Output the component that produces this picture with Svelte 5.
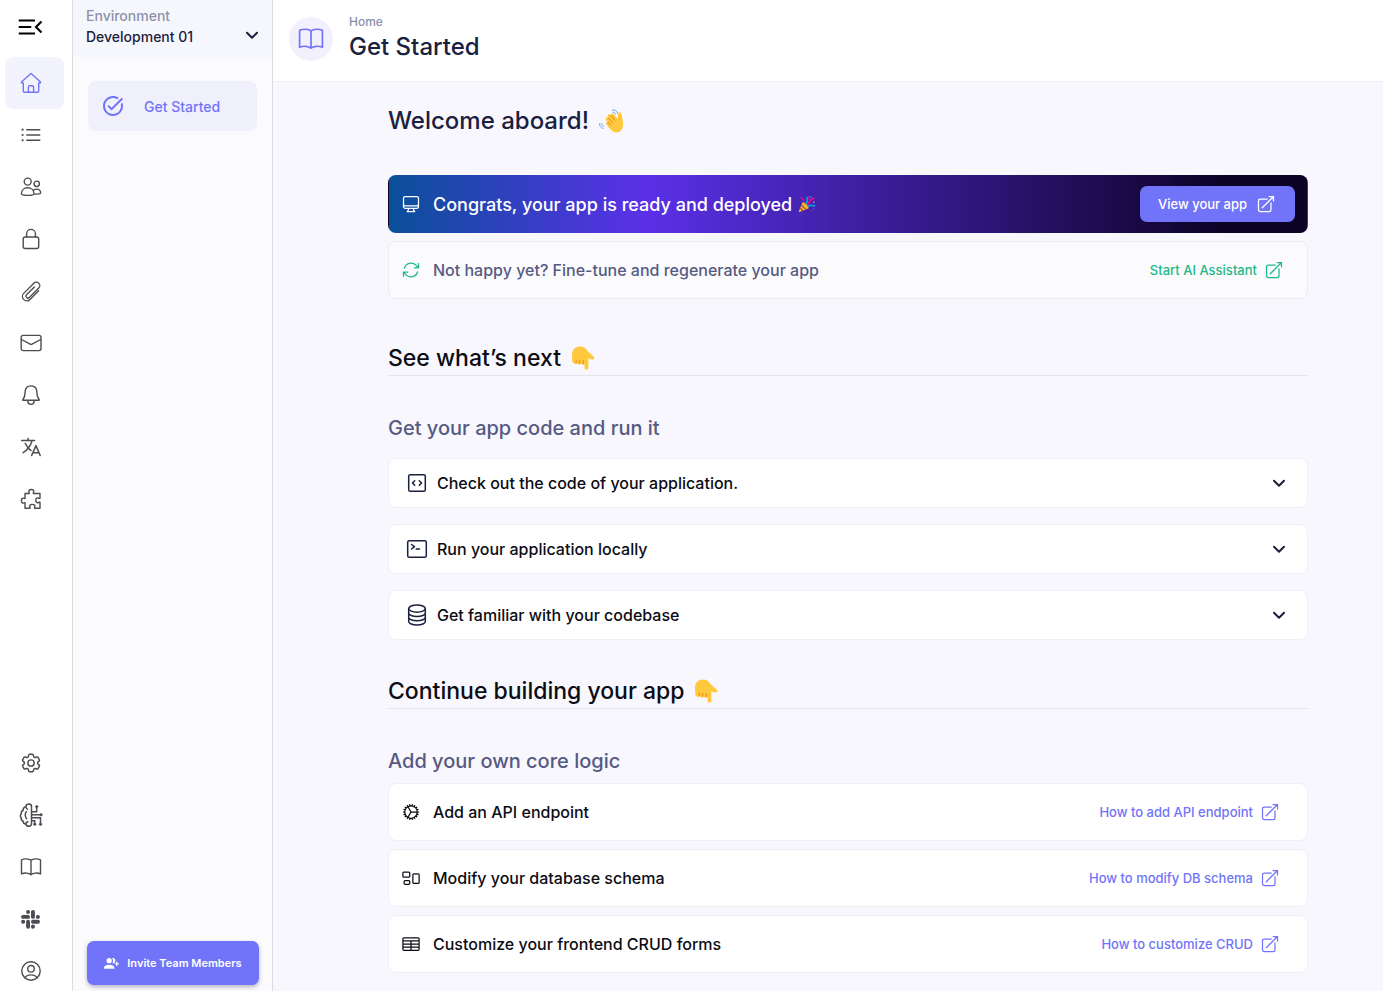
<script lang="ts">
  type Item = { name: string; icon: string; active?: boolean };

  const topNav: Item[] = [
    { name: 'Home', icon: 'home', active: true },
    { name: 'Entities', icon: 'list' },
    { name: 'Users', icon: 'people' },
    { name: 'Security', icon: 'lock' },
    { name: 'Files', icon: 'clip' },
    { name: 'Emails', icon: 'mail' },
    { name: 'Notifications', icon: 'bell' },
    { name: 'Translations', icon: 'language' },
    { name: 'Plugins', icon: 'puzzle' }
  ];
  const bottomNav: Item[] = [
    { name: 'Settings', icon: 'gear' },
    { name: 'AI', icon: 'brain' },
    { name: 'Docs', icon: 'book' },
    { name: 'Slack', icon: 'slack' },
    { name: 'Profile', icon: 'profile' }
  ];
  const steps = [
    { title: 'Check out the code of your application.', icon: 'code' },
    { title: 'Run your application locally', icon: 'terminal' },
    { title: 'Get familiar with your codebase', icon: 'database' }
  ];
  const guides = [
    { title: 'Add an API endpoint', icon: 'cog', link: 'How to add API endpoint' },
    { title: 'Modify your database schema', icon: 'schema', link: 'How to modify DB schema' },
    { title: 'Customize your frontend CRUD forms', icon: 'table', link: 'How to customize CRUD' }
  ];
</script>

{#snippet icon(name: string)}
  {#if name === 'home'}
    <svg class="line" viewBox="0 0 20 20"><path d="M.5 9.9V9L9.3.9a1 1 0 0 1 1.4 0L19.500 9v.9h-1.800v8a1.400 1.400 0 0 1-1.400 1.400H3.700a1.400 1.400 0 0 1-1.400-1.400v-8zM7.400 19.200v-5.100c0-.8.5-1.300 1.300-1.300h2.600c.8 0 1.300.5 1.300 1.300v5.100" /></svg>
  {:else if name === 'list'}
    <svg class="line" viewBox="0 0 20 20"><path d="M5.800 4.700h13M5.800 10h13M5.800 15.300h13" /><g fill="currentColor" stroke="none"><circle cx="1.600" cy="4.700" r="1.100" /><circle cx="1.600" cy="10" r="1.100" /><circle cx="1.600" cy="15.300" r="1.100" /></g></svg>
  {:else if name === 'people'}
    <svg class="line" viewBox="0 0 20 20"><circle cx="6.700" cy="4.600" r="3.500" /><circle cx="15.700" cy="6.800" r="2.700" /><path d="M.4 16.800c0-3.600 2.700-6 6.300-6s6.300 2.400 6.300 6c0 1-2.900 1.600-6.300 1.600S.4 17.800.4 16.800ZM13 12.800c.8-.5 1.700-.7 2.700-.7 2.300 0 3.900 1.600 3.900 4 0 .7-1.900 1-3.800 1-1 0-2 0-2.800-.2" /></svg>
  {:else if name === 'lock'}
    <svg class="line" viewBox="0 0 20 20"><rect x="2.200" y="8" width="15.500" height="11.500" rx="2" /><path d="M5.600 8V4.800a4.400 4.400 0 0 1 8.800 0V8" /></svg>
  {:else if name === 'clip'}
    <svg viewBox="1.500 1 21 21" fill="none" stroke="currentColor" stroke-width="1.400" stroke-linecap="round" stroke-linejoin="round"><path d="m20 11.300-9 9.100a4.600 4.600 0 0 1-6.700-6.400L15 3.300a3.600 3.600 0 0 1 5.200 5.100L10.200 18.300a2 2 0 0 1-2.900-2.800l8.200-8.200" /></svg>
  {:else if name === 'mail'}
    <svg class="line" viewBox="0 0 20 20"><rect x=".2" y="2.400" width="19.800" height="15.200" rx="2" /><path d="m.5 6.500 8.700 4.700c.6.400 1.200.4 1.800 0l8.700-4.700" /></svg>
  {:else if name === 'bell'}
    <svg class="line" viewBox="0 0 20 20"><path d="M10 .9c3.700 0 5.900 2.500 5.900 6.300 0 4.600 1 5.800 2.200 7.300.3.400 0 .8-.4.800H2.300c-.4 0-.7-.4-.4-.8 1.200-1.500 2.200-2.700 2.200-7.300C4.100 3.400 6.300.9 10 .9ZM6.900 15.500v.8a3.100 3.100 0 0 0 6.200 0v-.8" /></svg>
  {:else if name === 'language'}
    <svg viewBox="32 50 450 412" fill="none" stroke="currentColor" stroke-width="34" stroke-linecap="round" stroke-linejoin="round"><path d="M48 112h288M192 64v48M272 448l96-224 96 224M301 384h133M281 112S257 206 199 277 80 384 80 384M256 336s-35-27-72-75-56-85-56-85" /></svg>
  {:else if name === 'puzzle'}
    <svg class="line" viewBox="0 0 20 20"><path d="M4 4.500h4.200v-.8C7.200 2 8.200.5 10.300.5s3.100 1.500 2.100 3.200v.8H19v4.800h-1.200c-1.500-1-3-.1-3 2s1.500 3 3 2H19v5.900h-5.400v-1c1-1.400 0-2.800-2.300-2.800s-3.300 1.400-2.300 2.800v1H4v-5.500h-.8c-1.400 1-2.800 0-2.800-2.100s1.400-3.100 2.800-2.100H4z" /></svg>
  {:else if name === 'gear'}
    <svg viewBox="1.800 1.800 20.400 20.400" fill="none" stroke="currentColor" stroke-width="1.500" stroke-linejoin="round"><path d="M9.594 3.940c.09-.542.56-.94 1.110-.94h2.593c.55 0 1.020.398 1.110.94l.213 1.281c.063.374.313.686.645.87.074.04.147.083.22.127.325.196.72.257 1.075.124l1.217-.456a1.125 1.125 0 0 1 1.370.49l1.296 2.247a1.125 1.125 0 0 1-.26 1.431l-1.003.827c-.293.241-.438.613-.43.992a7.723 7.723 0 0 1 0 .255c-.008.378.137.75.43.991l1.004.827c.424.35.534.955.26 1.430l-1.298 2.247a1.125 1.125 0 0 1-1.369.491l-1.217-.456c-.355-.133-.75-.072-1.076.124a6.470 6.470 0 0 1-.22.128c-.331.183-.581.495-.644.869l-.213 1.281c-.09.543-.56.94-1.110.94h-2.594c-.55 0-1.019-.398-1.110-.94l-.213-1.281c-.062-.374-.312-.686-.644-.87a6.520 6.520 0 0 1-.22-.127c-.325-.196-.72-.257-1.076-.124l-1.217.456a1.125 1.125 0 0 1-1.369-.49l-1.297-2.247a1.125 1.125 0 0 1 .26-1.431l1.004-.827c.292-.24.437-.613.43-.991a6.932 6.932 0 0 1 0-.255c.007-.38-.138-.751-.43-.992l-1.004-.827a1.125 1.125 0 0 1-.26-1.430l1.297-2.247a1.125 1.125 0 0 1 1.370-.491l1.216.456c.356.133.751.072 1.076-.124.072-.044.146-.086.22-.128.332-.183.582-.495.644-.869l.214-1.280Z" /><circle cx="12" cy="12" r="3.200" /></svg>
  {:else if name === 'brain'}
    <svg class="wide" viewBox="0 0 24 24" fill="none" stroke="currentColor" stroke-width="1.500" stroke-linecap="round" stroke-linejoin="round"><path d="M12.500 3.500c0-1.400-1-2.500-2.600-2.500C8.200 1 7 2.200 6.800 3.800 5 4 3.900 5.500 4.200 7.300 2.600 8 2 9.300 2.300 10.700c-1.300 1.200-1.300 3 0 4.100-.4 1.600.4 2.900 1.900 3.500 0 1.700 1.100 2.800 2.700 2.900.3 1.200 1.500 2 3 2 1.600 0 2.600-1.200 2.600-2.600zM6.800 3.800c.1 1.200.7 1.900 1.700 2.300M6.900 21.200c0-1.300.8-2.300 2.100-2.500M7.500 8.500c-1.700 1.500-1.800 5.500.2 7.200M12.500 8.800h5.200V4.500M12.500 11.800h8.500M12.500 14.800h9V21M12.500 17.800h3.200V21" /><g fill="currentColor" stroke-width=".6"><circle cx="17.700" cy="3.600" r="1.200" /><circle cx="22" cy="11.800" r="1.200" /><circle cx="15.700" cy="21.300" r="1.200" /><circle cx="21.500" cy="21.300" r="1.200" /></g></svg>
  {:else if name === 'book'}
    <svg class="line" viewBox="0 0 20 20"><path d="M10 3.300C8 1.600 3.500 1.400.5 2.800v14.100c3-1.300 7.500-1.100 9.500.8 2-1.900 6.500-2.100 9.500-.8V2.800C16.500 1.400 12 1.600 10 3.300Zm0 0v14.300" /></svg>
  {:else if name === 'slack'}
    <svg viewBox="0 0 20 20" fill="currentColor">
      {#each [0, 90, 180, 270] as angle}
        <g transform="translate(-.5 .3) rotate({angle} 10 10)"><rect x="5.600" y=".6" width="3.900" height="4.100" rx="1.900" /><rect x=".6" y="5.600" width="8.900" height="3.900" rx="1.900" /></g>
      {/each}
    </svg>
  {:else if name === 'profile'}
    <svg class="line" viewBox="0 0 20 20"><circle cx="10" cy="10" r="9.200" /><circle cx="10" cy="7.800" r="3.300" /><path d="M3.800 16.600c1.500-2 3.700-2.700 6.200-2.700s4.700.7 6.200 2.700" /></svg>
  {:else if name === 'code'}
    <svg viewBox="0 0 20 20" fill="none" stroke="currentColor" stroke-width="1.500" stroke-linecap="round" stroke-linejoin="round"><rect x="1.700" y="1.700" width="16.600" height="16.600" rx="1.600" /><path d="M7.700 7.700 5.500 10l2.200 2.300M12.300 7.700l2.200 2.300-2.200 2.300" /></svg>
  {:else if name === 'terminal'}
    <svg viewBox="0 0 20 20" fill="none" stroke="currentColor" stroke-width="1.500" stroke-linecap="round" stroke-linejoin="round"><rect x=".7" y="1.700" width="18.600" height="16.600" rx="1.600" /><path d="m4.500 5.500 3 2.200-3 2.300M9.200 10h3.200" /></svg>
  {:else if name === 'database'}
    <svg viewBox="0 1 20 20" fill="none" stroke="currentColor" stroke-width="1.500"><ellipse cx="10" cy="4.600" rx="8.300" ry="3.600" /><path d="M1.700 4.600v12.800c0 2 3.700 3.600 8.300 3.600s8.300-1.600 8.300-3.600V4.600M1.700 8.900c0 2 3.700 3.600 8.300 3.600s8.300-1.600 8.300-3.600M1.700 13.200c0 2 3.700 3.600 8.300 3.600s8.300-1.600 8.300-3.600" /></svg>
  {:else if name === 'cog'}
    <svg class="hero" viewBox="0 0 24 24"><path d="M4.500 12a7.500 7.500 0 0 0 15 0m-15 0a7.500 7.500 0 1 1 15 0m-15 0H3m16.500 0H21m-1.500 0H12m-8.457 3.077 1.410-.513m14.095-5.130 1.410-.513M5.106 17.785l1.150-.964m11.490-9.642 1.149-.964M7.501 19.795l.75-1.300m7.500-12.990.75-1.300m-6.063 16.658.26-1.477m2.605-14.772.26-1.477m0 17.726-.26-1.477M10.698 4.614l-.26-1.477M16.500 19.794l-.75-1.299M7.500 4.205 12 12m6.894 5.785-1.149-.964M6.256 7.178l-1.150-.964m15.352 8.864-1.410-.513M4.954 9.435l-1.410-.514M12.002 12l-3.750 6.495" /></svg>
  {:else if name === 'schema'}
    <svg class="hero" viewBox="0 0 24 24"><path d="M2.250 6.125C2.250 5.500 2.754 5 3.375 5h6c.621 0 1.125.504 1.125 1.125v3.750c0 .621-.504 1.125-1.125 1.125h-6a1.125 1.125 0 0 1-1.125-1.125v-3.750ZM14.250 8.125c0-.621.504-1.125 1.125-1.125h5.250c.621 0 1.125.504 1.125 1.125v9.250c0 .621-.504 1.125-1.125 1.125h-5.250a1.125 1.125 0 0 1-1.125-1.125v-9.250ZM3.750 16.125c0-.621.504-1.125 1.125-1.125h4.500c.621 0 1.125.504 1.125 1.125v2.250c0 .621-.504 1.125-1.125 1.125h-4.500a1.125 1.125 0 0 1-1.125-1.125v-2.250Z" /></svg>
  {:else if name === 'table'}
    <svg class="hero" viewBox="0 0 24 24"><path d="M3.400 4.500h17.200c.6 0 1.100.5 1.100 1.100v12.800c0 .6-.5 1.100-1.100 1.100H3.400c-.6 0-1.100-.5-1.100-1.100V5.600c0-.6.5-1.100 1.100-1.100ZM2.300 8.300h19.400M2.300 12h19.400M2.300 15.700h19.400M12 8.300v11.200" /></svg>
  {:else if name === 'desktop'}
    <svg class="hero" viewBox="0 0 24 24"><path d="M9 17.250v1.007a3 3 0 0 1-.879 2.122L7.500 21h9l-.621-.621A3 3 0 0 1 15 18.257V17.250m6-12V15a2.250 2.250 0 0 1-2.250 2.250H5.250A2.250 2.250 0 0 1 3 15V5.250m18 0A2.250 2.250 0 0 0 18.750 3H5.250A2.250 2.250 0 0 0 3 5.250m18 0V12a2.250 2.250 0 0 1-2.250 2.250H5.250A2.250 2.250 0 0 1 3 12V5.250" /></svg>
  {:else if name === 'refresh'}
    <svg class="hero" viewBox="0 0 24 24"><path d="M16.023 9.348h4.992v-.001M2.985 19.644v-4.992m0 0h4.992m-4.993 0 3.181 3.183a8.250 8.250 0 0 0 13.803-3.700M4.031 9.865a8.250 8.250 0 0 1 13.803-3.700l3.181 3.182m0-4.991v4.990" /></svg>
  {:else if name === 'external'}
    <svg class="hero" viewBox="0 0 24 24"><path d="M13.500 6H5.250A2.250 2.250 0 0 0 3 8.250v10.500A2.250 2.250 0 0 0 5.250 21h10.500A2.250 2.250 0 0 0 18 18.750V10.500m-10.500 6L21 3m0 0h-5.250M21 3v5.250" /></svg>
  {:else if name === 'chevron'}
    <svg viewBox="0 0 20 20" fill="none" stroke="currentColor" stroke-width="2" stroke-linecap="round" stroke-linejoin="round"><path d="m5 7.800 5 5 5-5" /></svg>
  {/if}
{/snippet}

{#snippet pointDown()}
  <svg class="emoji" viewBox="0 0 24 24" aria-hidden="true">
    <path fill="#ffc83d" d="M1 10C.7 4 4 .5 9 .5c3.800 0 6.200 1.500 7.600 4.800l6.100 5.200c1.100 1 .7 2.700-.7 3-1.500.2-3.400-.4-4.700-1.200l.1 9.700c0 2.200-3.700 2.200-3.800 0l-.2-4.300c-.8 1.300-3 1.300-3.600 0-.8 1.200-2.900 1.200-3.500-.1C4.900 18.600 1.300 17.700 1.300 15z" />
    <path d="M5.200 14v2.800M8.700 14.200v3M12.300 14.500v3.300" fill="none" stroke="#e98b17" stroke-linecap="round" />
  </svg>
{/snippet}

<div class="app">
  <aside class="rail">
    <button class="collapse" aria-label="Collapse menu">
      <svg viewBox="0 0 24 24" fill="none" stroke="currentColor" stroke-width="1.700"><path d="M3 6.800h13M3 12h10M3 17.200h13M21.200 7.600 16.800 12l4.400 4.400" /></svg>
    </button>
    <nav class="top" aria-label="Main">
      {#each topNav as item}
        <a href="#{item.icon}" class:active={item.active} aria-label={item.name}>{@render icon(item.icon)}</a>
      {/each}
    </nav>
    <nav class="bottom" aria-label="Account">
      {#each bottomNav as item}
        <a href="#{item.icon}" aria-label={item.name}>{@render icon(item.icon)}</a>
      {/each}
    </nav>
  </aside>

  <aside class="side">
    <div class="env">
      <label for="env">Environment</label>
      <div class="pick">
        <select id="env"><option>Development 01</option></select>
        {@render icon('chevron')}
      </div>
    </div>
    <a class="entry" href="#get-started">
      <svg viewBox="0 0 24 24" fill="currentColor"><path d="M22 5.180 10.590 16.600l-4.240-4.240 1.410-1.410 2.830 2.830 10-10L22 5.180zm-2.210 5.040c.13.57.21 1.170.21 1.780 0 4.420-3.580 8-8 8s-8-3.580-8-8 3.580-8 8-8c1.580 0 3.040.46 4.280 1.250l1.440-1.440C16.100 2.670 14.130 2 12 2 6.480 2 2 6.480 2 12s4.480 10 10 10 10-4.480 10-10c0-1.190-.22-2.330-.6-3.390l-1.610 1.610z" /></svg>
      <span>Get Started</span>
    </a>
    <button class="invite">
      <svg viewBox="0 0 16 16" fill="currentColor"><circle cx="5.500" cy="5" r="2.800" /><path d="M0 13.500v-1.200c0-2 2.800-3.100 5.500-3.100S11 10.300 11 12.300v1.200zM8.700 2.300c2.700-.3 3.600 1.400 3.400 2.900-.2 1.400-1.400 2.500-3.300 2.500 1-1.500 1.200-3.600-.1-5.400zM13 6h1.300v1.600H16v1.300h-1.700v1.700H13V8.900h-1.700V7.600H13z" /></svg>
      Invite Team Members
    </button>
  </aside>

  <main>
    <header>
      <span class="badge">{@render icon('book')}</span>
      <div>
        <a class="crumb" href="#home">Home</a>
        <h1>Get Started</h1>
      </div>
    </header>

    <div class="content">
      <h2 class="welcome">
        Welcome aboard!
        <svg class="emoji" viewBox="0 0 24 24" aria-hidden="true">
          <path d="M13.500 1c2.700-.5 4.500.9 5.200 3.400M14 3.200c1.300 0 2.100.6 2.600 1.900M.6 14.500c-.2 2.700 1 4.300 3.500 4.900M2.800 14.700c0 1.300.6 2.100 1.900 2.600" fill="none" stroke="#6ea2f5" stroke-linecap="round" />
          <path fill="#ffc83d" d="M7.600 15.800c-1.500-1.600-.1-3.300 1.300-2.500-1.800-1.800-3-3.200-1.900-4.500.8-.9 1.900-.4 2.600.3-1.200-1.500-1.200-2.600-.3-3.300.9-.8 2-.4 2.800.6-.3-1.700 1.500-2.700 2.900-1l3.900 4.500c.5-1.300-.4-4.100.3-5.700.5-1.100 2.200-1.200 2.800.3 1.100 2.900 2.200 6.900 2 11.200-.1 4.600-2.400 7.700-6.700 7.700-4.300.1-7.500-5.100-9.700-7.600z" />
          <path d="m8.900 13.300 2.600 2.800M9.600 9.100l4 4.600M12.100 6.400l3.800 4.800" fill="none" stroke="#e08b1c" stroke-linecap="round" />
        </svg>
      </h2>

      <section class="banners">
        <div class="row deployed">
          {@render icon('desktop')}
          <p>
            Congrats, your app is ready and deployed
            <svg class="party" viewBox="0 0 20 20" aria-hidden="true">
              <path d="M5.200 7.800c3 .7 6 3.600 6.800 6.800L1.600 18.800c-.6.200-.9-.2-.7-.7z" fill="#ffb02e" />
              <path d="m3.800 11.300 4.900 4.700M2.500 14.600l2.900 2.700" stroke="#7a4b3a" stroke-width="1.300" />
              <path d="M8.500 9.500c2-1.500 2.500-4 1.200-7" stroke="#00a6ed" fill="none" stroke-width="1.800" stroke-linecap="round" />
              <path d="M10.700 10.500c1-3 3.500-3 4-5.500.2-1.300 1.500-1.600 3-1" stroke="#f70a8d" fill="none" stroke-width="1.700" stroke-linecap="round" />
              <path d="M11.500 12.500c3-2.500 4.500.3 7-.8" stroke="#00a6ed" fill="none" stroke-width="1.800" stroke-linecap="round" />
              <path d="m3.500 2.500 3 3.500M12.500 1.500l-.5 3" stroke="#f70a8d" stroke-width="1.300" stroke-linecap="round" />
              <circle cx="14" cy="2" r=".9" fill="#00a6ed" /><circle cx="17.500" cy="8" r=".8" fill="#f9c23c" /><circle cx="14.500" cy="17" r=".8" fill="#f70a8d" /><circle cx="17.500" cy="15.500" r=".7" fill="#00a6ed" />
            </svg>
          </p>
          <button class="view">View your app {@render icon('external')}</button>
        </div>
        <div class="row tune">
          <span class="green">{@render icon('refresh')}</span>
          <p>Not happy yet? Fine-tune and regenerate your app</p>
          <a class="green" href="#assistant">Start AI Assistant {@render icon('external')}</a>
        </div>
      </section>

      <section>
        <h2>See what’s next {@render pointDown()}</h2>
        <h3>Get your app code and run it</h3>
        <div class="steps">
          {#each steps as step}
            <button class="step" aria-expanded="false">
              {@render icon(step.icon)}
              <span>{step.title}</span>
              {@render icon('chevron')}
            </button>
          {/each}
        </div>
      </section>

      <section>
        <h2>Continue building your app {@render pointDown()}</h2>
        <h3 class="tight">Add your own core logic</h3>
        <div class="guides">
          {#each guides as guide}
            <div class="row">
              {@render icon(guide.icon)}
              <p>{guide.title}</p>
              <a href="#{guide.icon}">{guide.link} {@render icon('external')}</a>
            </div>
          {/each}
        </div>
      </section>
    </div>
  </main>
</div>

<style>
  :global(body) {
    margin: 0;
    overflow: hidden;
  }
  * {
    box-sizing: border-box;
  }
  .app {
    display: flex;
    height: 100vh;
    font-family: Inter, 'Open Sans', sans-serif;
    font-size: 16px;
    font-weight: 500;
    color: #0c0c14;
    background: #f7f7fd;
  }
  h1, h2, h3, p {
    margin: 0;
    font-weight: 500;
  }
  a {
    color: inherit;
    text-decoration: none;
  }
  button, select {
    font: inherit;
    color: inherit;
    border: 0;
    padding: 0;
    background: none;
    cursor: pointer;
  }
  svg {
    display: block;
    flex: none;
    width: 20px;
    height: 20px;
    overflow: visible;
  }
  .line {
    fill: none;
    stroke: currentColor;
    stroke-width: 1.4;
    stroke-linecap: round;
    stroke-linejoin: round;
  }
  .hero {
    fill: none;
    stroke: currentColor;
    stroke-width: 1.5;
    stroke-linecap: round;
    stroke-linejoin: round;
  }

  .rail {
    display: flex;
    flex-direction: column;
    flex: none;
    width: 73px;
    padding: 0 8px 0 5px;
    border-right: 1px solid #dcdce0;
    background: #fff;
    color: #4c4c53;
  }
  .collapse {
    padding: 12px 10px 15px;
    color: #000;
  }
  .collapse svg {
    width: 30px;
    height: 30px;
  }
  .rail nav {
    display: flex;
    flex-direction: column;
  }
  .rail nav a {
    display: flex;
    align-items: center;
    height: 52px;
    padding-left: 16px;
    border-radius: 8px;
  }
  .rail nav a.active {
    background: #f3f3fe;
    color: #7174f8;
  }
  .rail nav.bottom {
    gap: 12px;
    margin-top: auto;
  }
  .rail nav.bottom a {
    height: 40px;
  }
  .wide {
    width: 24px;
    height: 24px;
    margin-left: -2px;
  }

  .side {
    display: flex;
    flex-direction: column;
    flex: none;
    width: 200px;
    border-right: 1px solid #dcdce0;
    background: #fbfbfe;
  }
  .env {
    height: 57px;
    padding: 7px 10px 0 13px;
    background: #f6f7fc;
    font-size: 14px;
    line-height: 18px;
    color: #1a2040;
  }
  .env label {
    display: block;
    color: #8c90ab;
  }
  .pick {
    display: flex;
    height: 22px;
    padding-top: 2px;
  }
  .pick select {
    flex: 1;
    appearance: none;
  }
  .pick svg {
    margin: -2px 0 0 -20px;
    pointer-events: none;
  }
  .entry {
    display: flex;
    align-items: center;
    gap: 19px;
    height: 50px;
    margin: 24px 15px 0;
    padding-left: 13px;
    border-radius: 8px;
    background: #f0effc;
    color: #7174f8;
    font-size: 14px;
  }
  .entry svg {
    width: 24px;
    height: 24px;
  }
  .invite {
    display: flex;
    align-items: center;
    justify-content: center;
    gap: 8px;
    height: 44px;
    margin: auto 13px 6px 14px;
    border-radius: 7px;
    background: #7174f8;
    box-shadow: 0 2px 4px rgba(40, 40, 90, 0.35);
    color: #fff;
    font-size: 11px;
    font-weight: 600;
    white-space: nowrap;
  }
  .invite svg {
    width: 15px;
    height: 15px;
  }

  main {
    flex: 1;
    min-width: 0;
    overflow: hidden;
  }
  header {
    display: flex;
    align-items: center;
    gap: 16px;
    height: 82px;
    padding: 0 16px 4px;
    border-bottom: 1px solid #eeeef3;
    background: #fff;
    color: #1a2040;
  }
  .badge {
    display: grid;
    place-items: center;
    width: 44px;
    height: 44px;
    border-radius: 50%;
    background: #f3f0fe;
    color: #7174f8;
  }
  .badge svg {
    width: 24px;
    height: 24px;
  }
  .crumb {
    display: block;
    font-size: 12px;
    line-height: 16px;
    color: #8c90ab;
  }
  h1 {
    font-size: 24px;
    line-height: 34px;
  }
  .content {
    max-width: 960px;
    margin: 0 auto;
    padding: 24px 0 18px 40px;
  }
  h2 {
    display: flex;
    align-items: center;
    gap: 10px;
    height: 36px;
    border-bottom: 1px solid #e5e5ee;
    font-size: 23px;
    line-height: 32px;
  }
  .emoji {
    width: 24px;
    height: 24px;
  }
  .welcome {
    height: 30px;
    border: 0;
    font-size: 24px;
    color: #1a2040;
  }
  h3 {
    padding: 37px 0 15px;
    font-size: 20px;
    line-height: 30px;
    color: #565a82;
  }
  h3.tight {
    padding-bottom: 7px;
  }
  .banners {
    display: grid;
    gap: 8px;
    margin: 39px 0 41px;
  }
  .row {
    display: flex;
    align-items: center;
    gap: 12px;
    height: 58px;
    padding: 0 27px 0 12px;
    border: 1px solid #efeff5;
    border-radius: 8px;
    background: #fff;
  }
  .row p {
    flex: 1;
  }
  .row a, .view {
    display: flex;
    align-items: center;
    gap: 7px;
    font-size: 13px;
    color: #7174f8;
  }
  .row.deployed {
    padding-right: 12px;
    border-color: transparent;
    background: linear-gradient(90deg, #0a4f99 0%, #5b30e8 28%, #0c0226 91%);
    color: #fff;
  }
  .deployed p {
    display: flex;
    align-items: center;
    gap: 6px;
    font-size: 18px;
  }
  .party {
    width: 18px;
    height: 18px;
  }
  .view {
    justify-content: space-between;
    min-width: 155px;
    height: 36px;
    padding: 0 19px 0 18px;
    border-radius: 7px;
    background: #7174f8;
    color: #fff;
  }
  .row.tune {
    padding-right: 23px;
    border-color: #ebebf2;
    background: #fbfbfe;
    color: #565a82;
  }
  .row .green {
    color: #1fb888;
  }
  .steps {
    display: grid;
    gap: 16px;
    margin-bottom: 33px;
  }
  .step {
    display: flex;
    align-items: center;
    gap: 10px;
    height: 50px;
    padding: 0 18px;
    border: 1px solid #efeff5;
    border-radius: 8px;
    background: #fff;
    text-align: left;
  }
  .step span {
    flex: 1;
  }
  .step svg {
    color: #1a2040;
  }
  .guides {
    display: grid;
    gap: 8px;
  }
</style>
